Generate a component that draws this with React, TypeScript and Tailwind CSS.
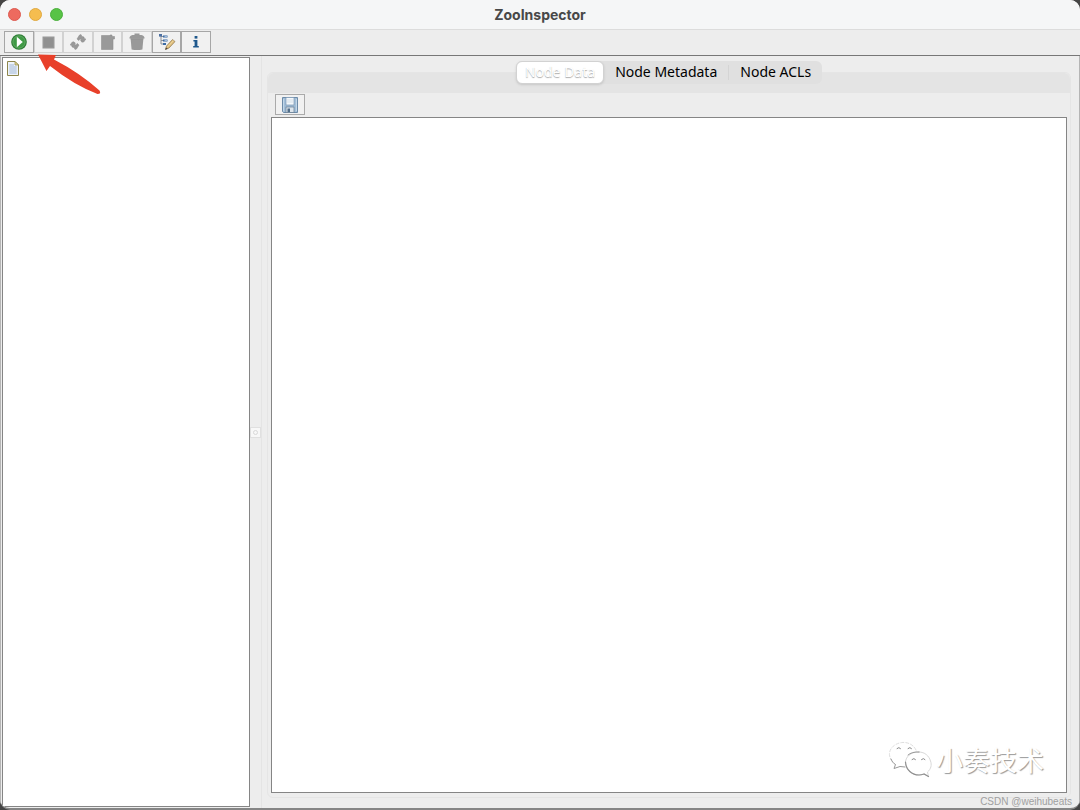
import React, { FC, Fragment, ReactNode, useState } from "react";
import clsx from "clsx";

const TABS = ["Node Data", "Node Metadata", "Node ACLs"];

const PlayIcon: FC = () => (
  <svg width="16" height="16" viewBox="0 0 16 16">
    <circle cx="8" cy="8" r="7.8" fill="#2b7d33" />
    <circle cx="8" cy="8" r="6.2" fill="#3f9a45" stroke="#7fbd80" strokeWidth="0.6" />
    <path d="M5.8 2.8 L11.8 8 L5.8 13.2 Z" fill="#fff" />
  </svg>
);

const StopIcon: FC = () => (
  <svg width="16" height="16" viewBox="0 0 16 16">
    <rect x="2.5" y="2.5" width="12" height="12" fill="#979797" />
    <rect x="4" y="4" width="9" height="9" fill="#909090" />
  </svg>
);

const RefreshIcon: FC = () => (
  <svg width="16" height="16" viewBox="0 0 16 16" fill="#999" stroke="#8a8a8a" strokeWidth="0.5">
    <path d="M7 5 L9.5 1 L11 0.6 L12 2.4 L14 3 L14.2 4.4 L15.8 5 L14 7.8 L12 8.2 L10.6 6.8 L11.4 5.6 L9.8 5 L8.8 6.6 Z" />
    <path d="M9 11 L6.5 15 L5 15.4 L4 13.6 L2 13 L1.8 11.6 L0.2 11 L2 8.2 L4 7.8 L5.4 9.2 L4.6 10.4 L6.2 11 L7.2 9.4 Z" />
  </svg>
);

const AddIcon: FC = () => (
  <svg width="16" height="16" viewBox="0 0 16 16">
    <path d="M2.5 1.5 H11 V1 H13 V2.5 H15.5 V5 H14 V15.5 H2.5 Z" fill="#999" stroke="#8e8e8e" strokeWidth="0.6" />
  </svg>
);

const TrashIcon: FC = () => (
  <svg width="16" height="18" viewBox="0 0 16 18" fill="#999">
    <path d="M5.5 2 V0.5 H10.5 V2 H12.5 Q15.6 2.8 15.6 5.6 H0.4 Q0.4 2.8 3.5 2 Z" />
    <path d="M1.6 5.5 H14.4 L13.4 16.4 Q8 17.8 2.6 16.4 Z" />
    <path d="M1.5 5.8 H14.5" stroke="#868686" strokeWidth="0.7" />
  </svg>
);

const TreeEditIcon: FC = () => (
  <svg width="18" height="18" viewBox="0 0 18 18" fill="none">
    <path d="M3 3 V11 H5 M3 3.5 H5 M3 7.5 H5" stroke="#8c9199" strokeWidth="1" />
    <rect x="1" y="1" width="3" height="2.6" fill="#4c70a2" />
    <path d="M5 3.5 H9.5 M5 7.5 H9.5 M5 11 H8" stroke="#3a6ba5" strokeWidth="2" />
    <path d="M6.5 3.5 H9 M6.5 7.5 H9" stroke="#cfe0f2" strokeWidth="0.7" />
    <path d="M7.5 16.5 L8.5 13 L14.5 6.5 L17 8.6 L11 15 Z" fill="#dfbd78" stroke="#8d7650" strokeWidth="0.7" />
    <path d="M9.5 14 L15.5 7.6" stroke="#f4dfad" strokeWidth="0.8" />
    <path d="M7.2 16.8 L8 14.4 L9.8 15.8 Z" fill="#4a4238" />
  </svg>
);

const InfoIcon: FC = () => (
  <svg width="16" height="16" viewBox="0 0 16 16" fill="#1f588c">
    <rect x="6.6" y="2" width="2.8" height="2.6" />
    <path d="M5.4 6 H9.4 V12 H10.8 V13.6 H5.2 V12 H6.6 V7.5 H5.4 Z" />
  </svg>
);

const SaveIcon: FC = () => (
  <svg width="18" height="18" viewBox="0 0 18 18">
    <path d="M1.5 1.5 H16.5 V16.5 H2.5 L1.5 15.5 Z" fill="#a3bfd8" stroke="#6d8ba8" />
    <path d="M2.5 3 V15 M15.5 3 V15" stroke="#c3d7e8" />
    <rect x="5" y="1.5" width="8" height="7.5" fill="#f4f8fb" stroke="#7895b2" strokeWidth="0.7" />
    <path d="M6 4 H12 M6 6 H12" stroke="#d5dfe8" />
    <rect x="5" y="11" width="8" height="5.5" fill="#dde5ec" stroke="#61788f" strokeWidth="0.7" />
    <rect x="6.5" y="12.5" width="2.5" height="3.5" fill="#516d88" />
  </svg>
);

const FileIcon: FC = () => (
  <svg width="12" height="15" viewBox="0 0 12 15">
    <path d="M0.5 0.5 H8 L11.5 4 V14.5 H0.5 Z" fill="#eef3fa" stroke="#8e874c" />
    <path d="M8 0.5 V4 H11.5 Z" fill="#e8d98c" stroke="#8e874c" strokeWidth="0.7" />
    <path d="M2.3 4 H7 M2.3 6 H9.7 M2.3 8 H9.7 M2.3 10 H9.7 M2.3 12 H9.7" stroke="#a0b7d5" />
  </svg>
);

const ChatLogo: FC = () => (
  <svg width="44" height="38" viewBox="0 0 44 38" fill="none" strokeLinecap="round">
    <path
      d="M28 9 C25 3 19 1 14 1.5 C6 2.5 1 8 1.5 14 C2 18 4 21 7.5 23.5"
      stroke="#dedede"
      strokeDasharray="3 2"
    />
    <path d="M3 18 C4 20.5 5.5 22.5 7.5 23.5 L6 27.5 L12 25.5 L17 26" stroke="#999" />
    <path
      d="M31 11 C23 10.5 17 16 17.5 22.5 C18 29 24 34 31 34 C33 34 34.5 33.5 36 33 L40.5 35.5 L39.5 31 C43 28 44 24 42.5 20 C41 15 37 11 31 11 Z"
      fill="#fff"
      stroke="#d8d8d8"
    />
    <path d="M17.5 21 C18 29 24 34 31 34 C33 34 34.5 33.5 36 33 L40.5 35.5" stroke="#909090" strokeWidth="1.2" />
    <path d="M20 14 Q24 10.5 31 11" stroke="#999" />
    <path d="M9 7.5 Q11 5.5 12.5 7.5 M20 7.5 Q22 5.5 23.5 7.5 M24 18.5 Q26 16.5 27.5 18.5 M33.5 18.5 Q35.5 16.5 37 18.5" stroke="#858585" />
  </svg>
);

interface ToolButtonProps {
  label: string;
  disabled?: boolean;
  children: ReactNode;
}

const ToolButton: FC<ToolButtonProps> = ({ label, disabled, children }) => (
  <button
    type="button"
    aria-label={label}
    title={label}
    disabled={disabled}
    className={clsx(
      "flex h-[22px] items-center justify-center border bg-[#f1f1f1]",
      disabled ? "border-[#d2d2d2]" : "border-[#a6a6a6]"
    )}
  >
    {children}
  </button>
);

const App: FC = () => {
  const [tab, setTab] = useState<string>("Node Data");
  const [data, setData] = useState<string>("");

  return (
    <div className="h-screen bg-[#454545]">
      <div className="relative flex h-full flex-col overflow-hidden rounded-[10px] border-b-2 border-[#858585] bg-[#ededed]">
        {/* Title bar */}
        <header className="grid h-[30px] shrink-0 grid-cols-[1fr_auto_1fr] items-center border-b border-[#dcdcdc] bg-[#f5f6f7] px-2">
          <div className="flex gap-2">
            <button type="button" aria-label="Close" className="size-[13px] rounded-full border border-[#dc5a50] bg-[#ed6a5f]" />
            <button type="button" aria-label="Minimize" className="size-[13px] rounded-full border border-[#dfa941] bg-[#f5bd4f]" />
            <button type="button" aria-label="Zoom" className="size-[13px] rounded-full border border-[#4baf3d] bg-[#58c346]" />
          </div>
          <h1 className="font-[Inter,sans-serif] text-sm leading-5 font-bold text-[#484848]">ZooInspector</h1>
        </header>

        {/* Toolbar */}
        <div className="flex h-[26px] shrink-0 items-start border-b border-[#777] pt-px pl-1">
          <div className="grid w-[207px] grid-cols-7">
            <ToolButton label="Connect"><PlayIcon /></ToolButton>
            <ToolButton label="Disconnect" disabled><StopIcon /></ToolButton>
            <ToolButton label="Refresh" disabled><RefreshIcon /></ToolButton>
            <ToolButton label="Add Node" disabled><AddIcon /></ToolButton>
            <ToolButton label="Delete Node" disabled><TrashIcon /></ToolButton>
            <ToolButton label="Node Viewers"><TreeEditIcon /></ToolButton>
            <ToolButton label="About"><InfoIcon /></ToolButton>
          </div>
        </div>

        <main className="flex min-h-0 flex-1 border-x border-[#b5b5b5]">
          {/* Node tree */}
          <aside className="mt-px mb-px ml-px w-[248px] shrink-0 border border-[#858585] bg-white px-1 py-[3px]">
            <button type="button" aria-label="Root node" className="block">
              <FileIcon />
            </button>
          </aside>

          <div className="flex w-3 shrink-0 items-center border-r border-[#e4e4e4]">
            <button
              type="button"
              aria-label="Resize panes"
              className="flex size-[11px] items-center justify-center border border-[#e0e0e0] bg-[#f8f8f8]"
            >
              <span className="size-[5px] rounded-full border border-[#d8d8d8]" />
            </button>
          </div>

          {/* Viewers */}
          <section className="flex min-w-0 flex-1 flex-col pt-4 pr-2 pb-[10px] pl-[5px]">
            <div className="flex min-h-0 flex-1 flex-col rounded-md border border-[#e5e5e5]">
              <div role="tablist" className="flex h-5 shrink-0 items-start justify-center rounded-t-md bg-[#e4e4e4]">
                <div className="-mt-3 flex h-[23px] items-stretch rounded-md bg-[#e0e0e0]">
                  {TABS.map((name, i) => (
                    <Fragment key={name}>
                      {i === 2 && <span className="my-1 w-px bg-[#d4d4d4]" />}
                      <button
                        type="button"
                        role="tab"
                        aria-selected={tab === name}
                        onClick={() => setTab(name)}
                        className={clsx(
                          "rounded-md pb-[2px] font-['Noto_Sans',sans-serif] text-sm leading-5",
                          tab === name
                            ? "border border-[#d2d2d2] bg-white px-2 text-white shadow-sm [text-shadow:0_1px_1px_#aaa]"
                            : "px-[11px] text-black"
                        )}
                      >
                        {name}
                      </button>
                    </Fragment>
                  ))}
                </div>
              </div>
              <div className="flex shrink-0 px-[7px] pt-[1px] pb-[2px]">
                <button
                  type="button"
                  aria-label="Save"
                  title="Save"
                  className="flex h-[21px] w-[30px] items-center justify-center border border-[#aaa] bg-[#f1f1f1]"
                >
                  <SaveIcon />
                </button>
              </div>
              <textarea
                aria-label={tab}
                value={data}
                onChange={(e) => setData(e.target.value)}
                className="mx-[3px] mb-1 min-h-0 flex-1 resize-none border border-[#858585] bg-white p-1 font-mono text-sm outline-none"
              />
            </div>
          </section>
        </main>

        {/* Arrow pointing at the connect button */}
        <svg className="pointer-events-none absolute top-[53px] left-[36px]" width="68" height="44" viewBox="0 0 68 44">
          <path
            d="M2 1.5 L20 2 L18 6.5 Q44 20 63.5 37.5 Q65.5 41 61.5 41 Q38 32 14 13 L10.5 18 Z"
            fill="#e8402a"
          />
        </svg>

        {/* Watermarks */}
        <div className="pointer-events-none absolute right-9 bottom-7 flex items-center gap-1">
          <ChatLogo />
          <span className="font-['Noto_Sans_CJK_SC',sans-serif] text-[27px] leading-10 text-white [text-shadow:1px_1px_1px_#999]">
            小奏技术
          </span>
        </div>
        <span className="pointer-events-none absolute right-2 bottom-0 font-['Liberation_Sans',sans-serif] text-[10px] leading-3 text-[#a0a0a0]">
          CSDN @weihubeats
        </span>
      </div>
    </div>
  );
};

export default App;
